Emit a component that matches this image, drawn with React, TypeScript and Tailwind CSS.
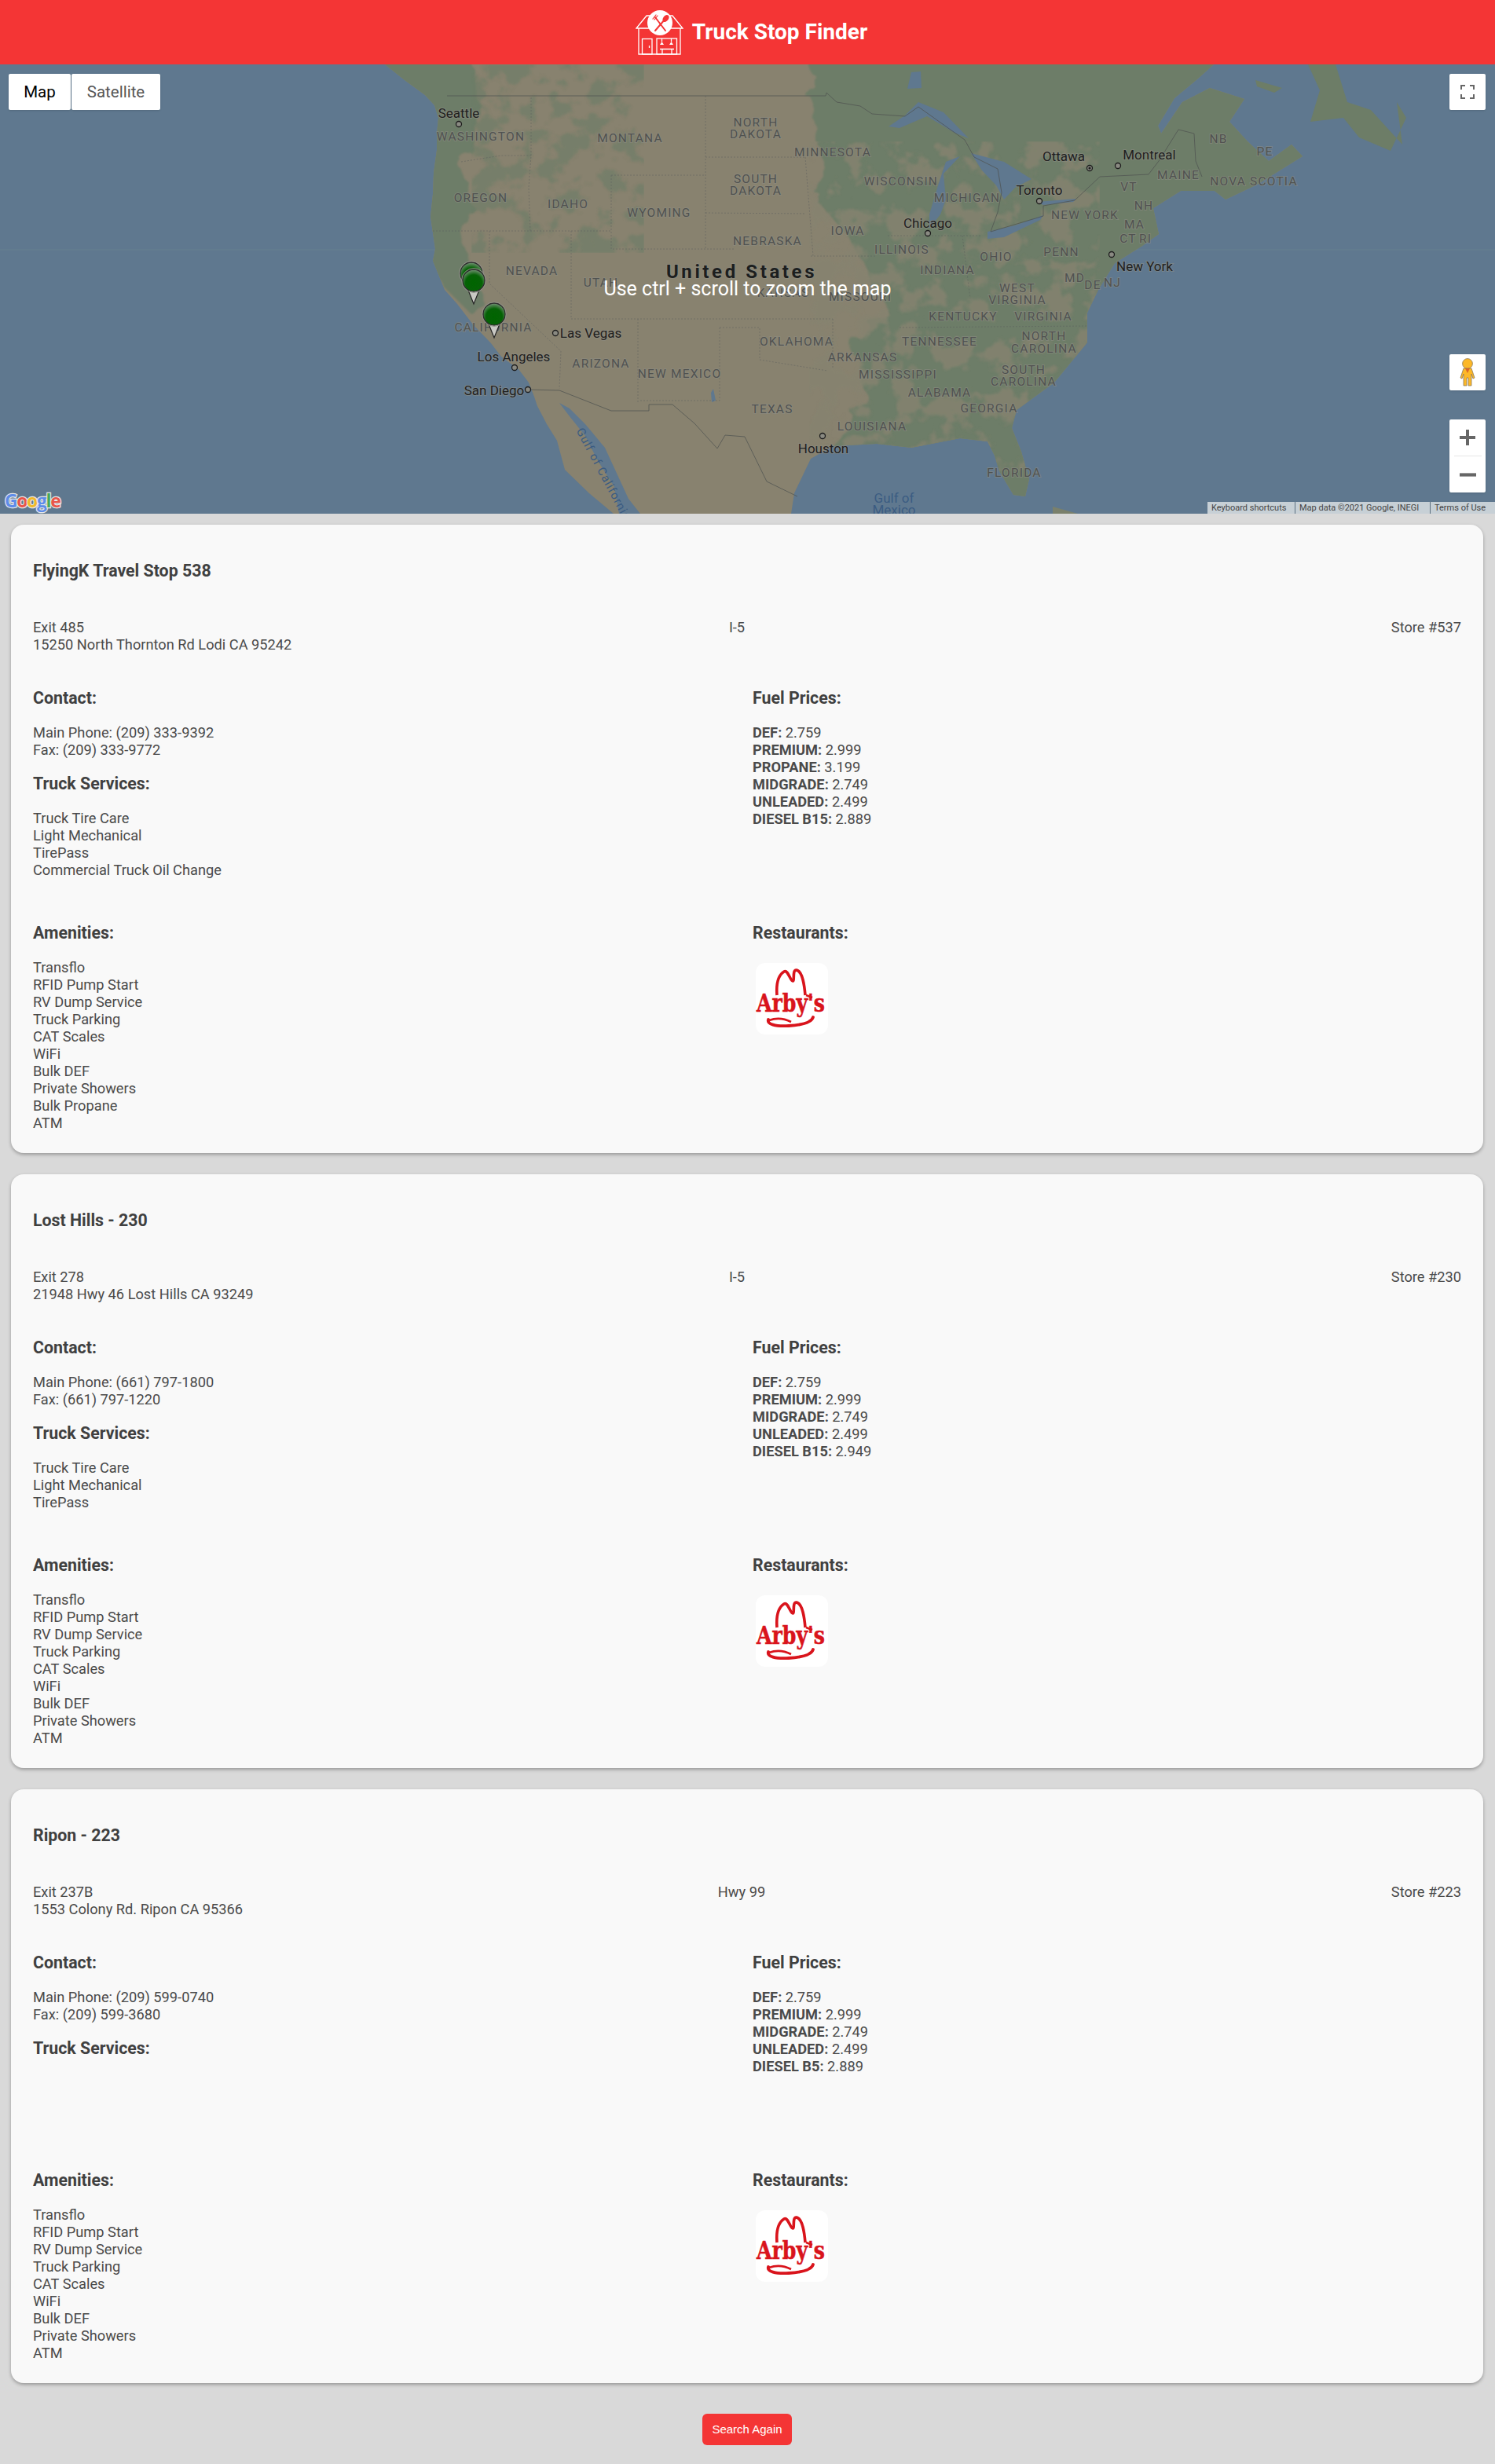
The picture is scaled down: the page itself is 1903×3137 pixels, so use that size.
const STOPS = [
  {
    name: 'FlyingK Travel Stop 538',
    exit: 'Exit 485',
    address: '15250 North Thornton Rd Lodi CA 95242',
    route: 'I-5',
    routeClass: 'pr-[26px]',
    store: 'Store #537',
    phone: '(209) 333-9392',
    fax: '(209) 333-9772',
    services: ['Truck Tire Care', 'Light Mechanical', 'TirePass', 'Commercial Truck Oil Change'],
    fuel: [
      ['DEF', '2.759'],
      ['PREMIUM', '2.999'],
      ['PROPANE', '3.199'],
      ['MIDGRADE', '2.749'],
      ['UNLEADED', '2.499'],
      ['DIESEL B15', '2.889'],
    ],
    amenities: ['Transflo', 'RFID Pump Start', 'RV Dump Service', 'Truck Parking', 'CAT Scales', 'WiFi', 'Bulk DEF', 'Private Showers', 'Bulk Propane', 'ATM'],
  },
  {
    name: 'Lost Hills - 230',
    exit: 'Exit 278',
    address: '21948 Hwy 46 Lost Hills CA 93249',
    route: 'I-5',
    routeClass: 'pr-[26px]',
    store: 'Store #230',
    phone: '(661) 797-1800',
    fax: '(661) 797-1220',
    services: ['Truck Tire Care', 'Light Mechanical', 'TirePass'],
    fuel: [
      ['DEF', '2.759'],
      ['PREMIUM', '2.999'],
      ['MIDGRADE', '2.749'],
      ['UNLEADED', '2.499'],
      ['DIESEL B15', '2.949'],
    ],
    amenities: ['Transflo', 'RFID Pump Start', 'RV Dump Service', 'Truck Parking', 'CAT Scales', 'WiFi', 'Bulk DEF', 'Private Showers', 'ATM'],
  },
  {
    name: 'Ripon - 223',
    exit: 'Exit 237B',
    address: '1553 Colony Rd. Ripon CA 95366',
    route: 'Hwy 99',
    routeClass: 'pr-[14px]',
    store: 'Store #223',
    phone: '(209) 599-0740',
    fax: '(209) 599-3680',
    services: [],
    fuel: [
      ['DEF', '2.759'],
      ['PREMIUM', '2.999'],
      ['MIDGRADE', '2.749'],
      ['UNLEADED', '2.499'],
      ['DIESEL B5', '2.889'],
    ],
    amenities: ['Transflo', 'RFID Pump Start', 'RV Dump Service', 'Truck Parking', 'CAT Scales', 'WiFi', 'Bulk DEF', 'Private Showers', 'ATM'],
  },
];

// map labels, page coordinates: text, x, y
const STATES: [string, number, number][] = [
  ['WASHINGTON', 612, 174], ['MONTANA', 802, 176], ['OREGON', 612, 252], ['IDAHO', 723, 260],
  ['NEVADA', 677, 345], ['UTAH', 765, 360], ['CALIFORNIA', 628, 417], ['ARIZONA', 765, 463],
  ['NORTH', 962, 156], ['DAKOTA', 962, 171], ['MINNESOTA', 1060, 194], ['SOUTH', 962, 228],
  ['DAKOTA', 962, 243], ['WISCONSIN', 1147, 231], ['MICHIGAN', 1231, 252], ['WYOMING', 839, 271],
  ['IOWA', 1079, 294], ['NEBRASKA', 977, 307], ['ILLINOIS', 1148, 318], ['OHIO', 1268, 327],
  ['PENN', 1351, 321], ['INDIANA', 1206, 344], ['KANSAS', 997, 373], ['MISSOURI', 1095, 378],
  ['WEST', 1295, 367], ['VIRGINIA', 1295, 382], ['MD', 1368, 354], ['DE', 1391, 363],
  ['NJ', 1416, 360], ['KENTUCKY', 1226, 403], ['VIRGINIA', 1328, 403], ['OKLAHOMA', 1014, 435],
  ['TENNESSEE', 1196, 435], ['NORTH', 1329, 428], ['CAROLINA', 1329, 444], ['ARKANSAS', 1098, 455],
  ['NEW MEXICO', 865, 476], ['MISSISSIPPI', 1143, 477], ['SOUTH', 1303, 471], ['CAROLINA', 1303, 486],
  ['ALABAMA', 1196, 500], ['GEORGIA', 1259, 520], ['TEXAS', 983, 521], ['LOUISIANA', 1110, 543],
  ['FLORIDA', 1291, 602], ['NEW YORK', 1381, 274], ['MAINE', 1500, 223], ['VT', 1437, 238],
  ['NH', 1456, 262], ['MA', 1444, 286], ['CT', 1436, 304], ['RI', 1458, 304],
  ['NB', 1551, 177], ['PE', 1610, 193], ['NOVA SCOTIA', 1596, 231],
];

const CITIES: [string, number, number][] = [
  ['Seattle', 584, 144], ['Las Vegas', 752, 424], ['Los Angeles', 654, 454], ['San Diego', 629, 497],
  ['Chicago', 1181, 284], ['Houston', 1048, 571], ['Ottawa', 1354, 199], ['Montreal', 1463, 197],
  ['Toronto', 1323, 242], ['New York', 1457, 339],
];

const DOTS: [number, number][] = [
  [584, 158], [707, 424], [655, 468], [672, 496], [1181, 297], [1047, 555], [1387, 214], [1423, 211], [1323, 256], [1415, 324],
];

const LAND =
  'M490 82 L515 102 L541 121 L553 134 L558 150 L556 170 L556 191 L552 220 L551 247 L548 276 L554 317 L551 332 L566 369 L582 387 L602 413 L625 437 L638 454 L660 470 L673 487 L680 505 L684 517 L696 540 L709 561 L719 598 L750 628 L781 654 L788 654 L782 620 L760 585 L745 555 L725 530 L712 513 L725 520 L745 540 L770 570 L800 635 L815 654 L1007 654 L1011 628 L1032 584 L1060 568 L1116 565 L1160 570 L1222 558 L1257 562 L1266 580 L1272 600 L1290 630 L1305 632 L1310 610 L1300 575 L1288 545 L1294 522 L1342 487 L1384 436 L1384 398 L1398 369 L1419 335 L1454 313 L1475 298 L1468 265 L1503 243 L1546 243 L1560 254 L1600 235 L1658 199 L1644 184 L1615 205 L1588 180 L1565 155 L1584 126 L1540 112 L1505 130 L1478 170 L1474 160 L1495 125 L1525 100 L1545 82 Z';

const LAKES = [
  'M1131 161 L1152 147 L1169 130 L1201 143 L1233 176 L1215 169 L1180 148 L1145 163 Z',
  'M1183 273 L1194 236 L1204 206 L1222 199 L1201 221 L1204 254 L1197 273 L1183 291 Z',
  'M1236 195 L1278 206 L1313 228 L1292 239 L1278 254 L1268 236 L1250 217 Z',
  'M1257 295 L1292 287 L1328 274 L1324 280 L1278 302 L1257 304 Z',
  'M1320 257 L1370 253 L1366 257 L1328 261 Z',
  'M1155 113 L1160 92 L1172 91 L1173 112 Z',
  'M905 500 L908 495 L911 510 L906 512 Z',
];

function TruckStopIcon() {
  return (
    <svg viewBox="0 0 61 57" className="h-[57px] w-[61px] shrink-0" fill="none" stroke="#fff" strokeWidth="1.3">
      <path d="M1 23 L14 7 H47 L60 23 Z M4 23 V56 H57 V23" />
      <rect x="8.5" y="36.5" width="12.5" height="19.5" />
      <path d="M17.5 45 V48" />
      <rect x="27" y="36" width="25.5" height="20" />
      <circle cx="31" cy="16" r="16" fill="#fff" stroke="none" />
      <g stroke="#f43535" strokeWidth="2" strokeLinecap="round">
        <path d="M25 9 L38 26" />
        <path d="M37 12 L25 26" />
        <path d="M22 11 L26 6 M24 12 L28 7" strokeWidth="1.2" />
      </g>
      <ellipse cx="38.5" cy="10.5" rx="3.4" ry="5" transform="rotate(38 38.5 10.5)" fill="#f43535" stroke="none" />
      <path d="M31 44 H36 L33.5 40 Z M43 44 H48 L45.5 40 Z" fill="#fff" stroke="none" />
      <path d="M33.5 36 V40 M45.5 36 V40 M31 49.5 H49 M34 49.5 V56 M46 49.5 V56" />
    </svg>
  );
}

function ArbysLogo() {
  return (
    <div className="h-[91px] w-[92px] rounded-[12px] bg-white">
      <svg viewBox="0 0 92 91" className="h-full w-full" fill="none">
        <path
          d="M27 41 C26 28 28 16 36 11 C41 8 44 23 47 23 C50 23 46 8 52 9 C60 11 62 30 63 41"
          stroke="#d9141c"
          strokeWidth="3.6"
        />
        <path d="M64 41 L72 44" stroke="#d9141c" strokeWidth="2.6" />
        <path
          d="M16 72 C14 78 25 81 42 80 C58 79 71 76 73 69"
          stroke="#d9141c"
          strokeWidth="3.8"
          strokeLinecap="round"
        />
        <path d="M17 73 C28 69 37 71 45 75" stroke="#d9141c" strokeWidth="2.6" />
        <text
          x="1"
          y="62"
          fontSize="31"
          fontWeight="700"
          fill="#d9141c"
          stroke="#d9141c"
          strokeWidth="0.6"
          textLength="87"
          lengthAdjust="spacingAndGlyphs"
          fontFamily="'DejaVu Serif', 'Liberation Serif', serif"
        >
          Arby's
        </text>
      </svg>
    </div>
  );
}

function Pin({ x, y, tail = true }: { x: number; y: number; tail?: boolean }) {
  return (
    <g transform={`translate(${x} ${y})`}>
      {tail && <path d="M-8 10 L0 30 L8 10 Z" fill="#c9c9c4" stroke="#222" strokeWidth="1.2" />}
      <circle r="14" fill="url(#pinGreen)" stroke="#2b2b2b" strokeWidth="1.3" />
      <circle r="15.4" fill="none" stroke="#8f8f88" strokeWidth="1" />
    </g>
  );
}

function MapDrawing() {
  return (
    <svg viewBox="0 82 1903 572" className="block h-full w-full" fontFamily="Roboto, sans-serif">
      <defs>
        <clipPath id="landClip">
          <path d={LAND} />
        </clipPath>
        {/* noise used as a mask: gives the blotchy forest cover of the terrain tiles */}
        <filter id="blotchy" x="0" y="0" width="100%" height="100%">
          <feTurbulence type="fractalNoise" baseFrequency="0.03" numOctaves="4" seed="11" result="noise" />
          <feColorMatrix
            in="noise"
            type="matrix"
            values="0 0 0 0 0  0 0 0 0 0  0 0 0 0 0  9 0 0 0 -4.4"
            result="mask"
          />
          <feComposite in="SourceGraphic" in2="mask" operator="in" />
          <feGaussianBlur stdDeviation="0.8" />
        </filter>
        <filter id="rough" x="-5%" y="-5%" width="110%" height="110%">
          <feTurbulence type="fractalNoise" baseFrequency="0.035" numOctaves="3" seed="7" />
          <feDisplacementMap in="SourceGraphic" scale="26" />
          <feGaussianBlur stdDeviation="1" />
        </filter>
        <radialGradient id="pinGreen" cx="50%" cy="62%" r="60%">
          <stop offset="0%" stopColor="#006400" />
          <stop offset="62%" stopColor="#056205" />
          <stop offset="100%" stopColor="#6f8f70" />
        </radialGradient>
      </defs>

      <rect x="0" y="82" width="1903" height="572" fill="#5f788f" />
      <path d="M0 318 H1903" stroke="#66808f" strokeWidth="1" />

      <path d={LAND} fill="#88826f" />
      <g clipPath="url(#landClip)">
        <g fill="#6d7d67" filter="url(#rough)">
          <path d="M480 75 L600 75 L615 150 L590 205 L600 260 L590 300 L605 350 L620 392 L600 400 L565 365 L530 290 L535 200 Z" />
          <path d="M1030 70 L1700 70 L1700 320 L1500 340 L1420 470 L1350 540 L1320 640 L1275 640 L1240 575 L1100 590 L1060 590 L1080 540 L1100 500 L1085 430 L1130 400 L1105 345 L1075 295 L1045 262 L1045 200 L1030 130 Z" />
        </g>
        {/* forest blotches on the plains side, tan fields on the eastern side */}
        <rect x="600" y="82" width="220" height="240" fill="#6d7d67" opacity="0.65" filter="url(#blotchy)" />
        <rect x="1030" y="180" width="370" height="420" fill="#868370" opacity="0.8" filter="url(#blotchy)" />
      </g>

      {/* Newfoundland and the small islands */}
      <path
        d="M1665 82 L1700 82 L1715 130 L1745 140 L1785 184 L1778 130 L1790 150 L1770 192 L1730 175 L1710 150 L1668 155 L1680 115 Z"
        fill="#6d7d67"
      />
      <path d="M1598 102 L1632 112 L1622 118 L1600 110 Z" fill="#6d7d67" />
      <path d="M1340 645 L1372 654 L1340 654 Z" fill="#7a806c" />

      {LAKES.map((d) => (
        <path key={d} d={d} fill="#5f788f" />
      ))}

      <g fill="none" stroke="#4f5350" strokeWidth="1" opacity="0.75">
        <path d="M569 122 L1051 122 L1052 118 L1065 130 L1095 135 L1110 145 L1152 148 L1169 136 L1228 178 L1240 200 L1270 215 L1275 245 L1270 270 L1261 295 L1328 275 L1328 262 L1368 255 L1400 225 L1462 222 L1475 205 L1500 165 L1520 170 L1522 205 L1530 225" />
        <path d="M672 496 L712 497 L778 523 L826 523 L826 515 L856 515 L884 539 L913 571 L923 554 L948 556 L976 613 L1015 632" />
      </g>
      <g fill="none" stroke="#55585a" strokeWidth="0.8" strokeDasharray="2 2" opacity="0.55">
        <path d="M587 206 L638 198 L676 198 M676 124 L676 198 L673 239 L675 294 M551 294 L778 294 M623 294 L623 361 L714 447 L712 495" />
        <path d="M727 294 L727 406 M727 406 L1060 406 M778 223 L778 317 L934 317 M778 223 L898 223 M898 122 L898 317 M898 200 L1025 200 M898 271 L1025 272" />
        <path d="M916 417 L967 417 L967 458 L1053 472 M916 417 L916 510 L814 510 M812 406 L812 513 M1032 326 L1116 326 M1130 300 L1250 300 M1145 417 L1384 415 M1025 200 L1035 326 M1225 300 L1235 380 M1060 406 L1060 470" />
      </g>

      {STATES.map(([label, x, y]) => (
        <text
          key={`${label}${x}`}
          x={x}
          y={y + 5}
          textAnchor="middle"
          fontSize="15.5"
          letterSpacing="1.2"
          fill="#505250"
          stroke="#8d8d85"
          strokeOpacity="0.55"
          strokeWidth="2"
          paintOrder="stroke"
        >
          {label}
        </text>
      ))}
      {CITIES.map(([label, x, y]) => (
        <text
          key={label}
          x={x}
          y={y + 6}
          textAnchor="middle"
          fontSize="17"
          fill="#1f2020"
          stroke="#8d8d85"
          strokeOpacity="0.55"
          strokeWidth="2"
          paintOrder="stroke"
        >
          {label}
        </text>
      ))}
      {DOTS.map(([x, y]) => (
        <circle key={`${x}-${y}`} cx={x} cy={y} r="3.5" fill="#8a8a82" stroke="#1c1c1c" strokeWidth="1.3" />
      ))}
      <circle cx="1387" cy="214" r="1.6" fill="#1c1c1c" />

      <text x="944" y="354" textAnchor="middle" fontSize="24" fontWeight="700" letterSpacing="3.6" fill="#1c1e1e" stroke="#8d8d85" strokeOpacity="0.5" strokeWidth="2" paintOrder="stroke">
        United States
      </text>
      <text x="1138" y="640" textAnchor="middle" fontSize="17" fill="#3b5c82">Gulf of</text>
      <text x="1138" y="655" textAnchor="middle" fontSize="17" fill="#3b5c82">Mexico</text>
      <text x="0" y="0" textAnchor="middle" fontSize="15" letterSpacing="1" fill="#3b5c82" transform="translate(764 606) rotate(62)">
        Gulf of California
      </text>

      <Pin x={600} y={348} tail={false} />
      <Pin x={603} y={357} />
      <Pin x={629} y={400} />

      <text x="6" y="646" fontSize="23" fontWeight="700" stroke="#e8e8e8" strokeWidth="2.5" paintOrder="stroke" fontFamily="'Open Sans', sans-serif" letterSpacing="-1.4">
        <tspan fill="#5e8ce8">G</tspan>
        <tspan fill="#e8554a">o</tspan>
        <tspan fill="#f0b92c">o</tspan>
        <tspan fill="#5e8ce8">g</tspan>
        <tspan fill="#45a85a">l</tspan>
        <tspan fill="#e8554a">e</tspan>
      </text>
    </svg>
  );
}

function MapPanel() {
  return (
    <div className="relative h-[572px] overflow-hidden">
      <MapDrawing />

      <div className="absolute inset-0 flex items-center justify-center pb-[1px] text-[25px] text-white">
        Use ctrl + scroll to zoom the map
      </div>

      <div className="absolute left-[11px] top-[12px] flex gap-[1px] text-[20.5px]">
        <div className="flex h-[46px] w-[79px] items-center justify-center rounded-[2px] bg-white text-black shadow">Map</div>
        <div className="flex h-[46px] w-[113px] items-center justify-center rounded-[2px] bg-white text-[#565656] shadow">Satellite</div>
      </div>

      <div className="absolute right-[12px] top-[12px] flex h-[46px] w-[46px] items-center justify-center rounded-[2px] bg-white shadow">
        <svg viewBox="0 0 18 18" className="h-[18px] w-[18px]" fill="none" stroke="#666" strokeWidth="2">
          <path d="M1 6 V1 H6 M12 1 H17 V6 M17 12 V17 H12 M6 17 H1 V12" />
        </svg>
      </div>

      <div className="absolute right-[12px] top-[369px] flex h-[46px] w-[46px] items-center justify-center rounded-[2px] bg-white shadow">
        <svg viewBox="0 0 20 36" className="h-[36px] w-[20px]">
          <circle cx="10" cy="7" r="6.4" fill="#fdb827" stroke="#8a7a5a" strokeWidth="0.8" />
          <path
            d="M5 13 H15 L19 25 L17 26 L15 20 V35 H11 V25 H9 V35 H5 V20 L3 26 L1 25 Z"
            fill="#fdb827"
            stroke="#8a7a5a"
            strokeWidth="0.8"
          />
          <path d="M7 13 H13 L10 19 Z" fill="#d9662a" />
        </svg>
      </div>

      <div className="absolute right-[12px] top-[452px] flex h-[93px] w-[46px] flex-col items-center rounded-[2px] bg-white shadow">
        <svg viewBox="0 0 20 20" className="mt-[13px] h-[20px] w-[20px]">
          <path d="M0 8 H8 V0 H12 V8 H20 V12 H12 V20 H8 V12 H0 Z" fill="#666" />
        </svg>
        <div className="mt-[13px] h-px w-[35px] bg-[#e6e6e6]" />
        <svg viewBox="0 0 20 4" className="mt-[21px] h-[5px] w-[21px]">
          <rect width="20" height="4" fill="#666" />
        </svg>
      </div>

      <div className="absolute bottom-0 right-0 flex h-[15px] w-[366px] items-center bg-[#c7d0d6] text-[11px] leading-none text-[#444]">
        <span className="w-[112px] border-r border-[#5c6f80] pl-[5px] leading-[15px]">Keyboard shortcuts</span>
        <span className="w-[172px] border-r border-[#5c6f80] pl-[5px] leading-[15px]">Map data ©2021 Google, INEGI</span>
        <span className="pl-[5px]">Terms of Use</span>
      </div>
    </div>
  );
}

function Heading({ children }: { children: string }) {
  return <h3 className="text-[21.33px] leading-[26px] font-bold text-[#404040]">{children}</h3>;
}

function Lines({ items, className = '' }: { items: string[]; className?: string }) {
  return (
    <ul className={`mt-[20px] ${className}`}>
      {items.map((item) => (
        <li key={item}>{item}</li>
      ))}
    </ul>
  );
}

function StopCard({ stop }: { stop: (typeof STOPS)[number] }) {
  return (
    <section className="ml-[14px] mr-[15px] rounded-[16px] bg-[#f9f9f9] px-[28px] pb-[27px] pt-[44px] text-[18.24px] leading-[22px] text-[#4a4a4a] shadow-[0_2px_4px_rgba(0,0,0,0.3)]">
      <h2 className="text-[21.33px] leading-[30px] font-bold text-[#404040]">{stop.name}</h2>

      <div className="mt-[46px] grid grid-cols-[1fr_auto_1fr]">
        <div>
          <p>{stop.exit}</p>
          <p>{stop.address}</p>
        </div>
        <p className={stop.routeClass}>{stop.route}</p>
        <p className="text-right">{stop.store}</p>
      </div>

      <div className="mt-[44px] grid grid-cols-2 gap-x-[14px]">
        <div>
          <Heading>Contact:</Heading>
          <ul className="mt-[20px]">
            <li>Main Phone: {stop.phone}</li>
            <li>Fax: {stop.fax}</li>
          </ul>
          <div className="mt-[19px]">
            <Heading>Truck Services:</Heading>
          </div>
          <Lines items={stop.services} className="min-h-[66px]" />
        </div>
        <div>
          <Heading>Fuel Prices:</Heading>
          <ul className="mt-[20px]">
            {stop.fuel.map(([label, price]) => (
              <li key={label}>
                <b className="font-bold">{label}:</b> {price}
              </li>
            ))}
          </ul>
        </div>
      </div>

      <div className="mt-[56px] grid grid-cols-2 gap-x-[14px]">
        <div>
          <Heading>Amenities:</Heading>
          <Lines items={stop.amenities} />
        </div>
        <div>
          <Heading>Restaurants:</Heading>
          <div className="ml-[4px] mt-[25px]">
            <ArbysLogo />
          </div>
        </div>
      </div>
    </section>
  );
}

export default function App() {
  return (
    <div className="min-h-[3137px] bg-[#d9d9d9] font-['Roboto',sans-serif]">
      <header className="flex h-[82px] items-center justify-center gap-[11px] bg-[#f43535] pl-[10px]">
        <TruckStopIcon />
        <h1 className="text-[28px] font-bold text-white">Truck Stop Finder</h1>
      </header>

      <MapPanel />

      <main className="mt-[14px] flex flex-col gap-[27px]">
        {STOPS.map((stop) => (
          <StopCard key={stop.name} stop={stop} />
        ))}
      </main>

      <div className="mt-[39px] flex justify-center pr-[1px]">
        <button className="h-[40px] w-[114px] rounded-[6px] bg-[#f43535] font-['Liberation_Sans',sans-serif] text-[15px] text-white">
          Search Again
        </button>
      </div>
    </div>
  );
}
